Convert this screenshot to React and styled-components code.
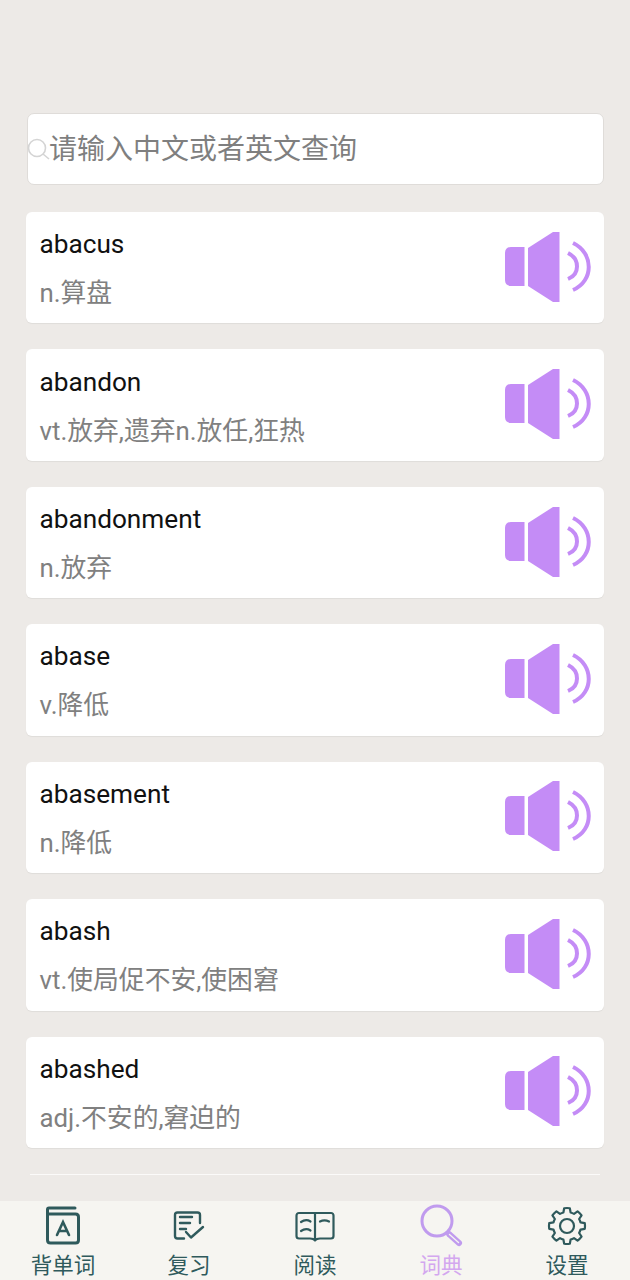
import React from 'react';
import styled, {createGlobalStyle} from 'styled-components';

const CJK = `Roboto, "Noto Sans CJK SC", sans-serif`;
const INK = '#2f5a5c';
const PURPLE = '#c48cf6';

const GlobalStyle = createGlobalStyle`
  html, body {
    margin: 0;
    padding: 0;
    background: #edeae7;
  }
`;

const Page = styled.div`
  width: 630px;
  height: 1280px;
  display: flex;
  flex-direction: column;
  overflow: hidden;
  font-family: ${CJK};
`;

const Content = styled.div`
  flex: 1;
  min-height: 0;
  padding: 113px 26px 0 26px;
  overflow: hidden;
`;

const SearchBox = styled.div`
  height: 72px;
  box-sizing: border-box;
  margin: 0 0.5px 0 1px;
  padding-bottom: 5px;
  display: flex;
  align-items: center;
  background: #fff;
  border: 1px solid #dfdcd9;
  border-radius: 7px;
  color: #7f7f7f;
  font-size: 28px;
`;

const SearchIcon = styled.svg`
  width: 23px;
  height: 23px;
  margin: 5px -1px 0 -1px;
  flex: none;
`;

const WordList = styled.div`
  margin-top: 27px;
  display: flex;
  flex-direction: column;
  gap: 26px;
`;

const Card = styled.div`
  height: 111.43px;
  box-sizing: border-box;
  padding: 0 12px 0 13.5px;
  display: flex;
  align-items: center;
  justify-content: space-between;
  background: #fff;
  border-radius: 6px;
  box-shadow: 0 1px 1px rgba(0, 0, 0, 0.06);
`;

const CardText = styled.div`
  display: flex;
  flex-direction: column;
  gap: 16px;
  padding-top: 3px;
`;

const Word = styled.div`
  color: #111;
  font-size: 26.2px;
  line-height: 33px;
`;

const Meaning = styled.div`
  color: #808080;
  font-size: 25.8px;
  line-height: 33px;
`;

const SpeakerIcon = styled.svg`
  width: 87px;
  height: 72px;
  margin-bottom: 2px;
  flex: none;
`;

const Divider = styled.div`
  height: 1px;
  margin: 26px 4px 0 4px;
  background: #fbfaf9;
`;

const TabBar = styled.div`
  height: 79px;
  flex: none;
  display: grid;
  grid-template-columns: repeat(5, 126px);
  background: #f6f5f1;
`;

const Tab = styled.div`
  display: flex;
  flex-direction: column;
  align-items: center;
  color: ${p => (p.$active ? '#d3a7ef' : INK)};
  font-size: 21.5px;
`;

const TabIcon = styled.div`
  height: 50px;
  display: flex;
  align-items: center;
  justify-content: center;
`;

const TabLabel = styled.div`
  line-height: 29px;
`;

const Speaker = () => (
  <SpeakerIcon viewBox="0 0 87 72">
    <path d="M6 16H19.5V55H6C2.5 55 0 53 0 49V22C0 18 2.5 16 6 16Z" fill={PURPLE} />
    <path d="M23 17L48 1H54.5V71H48L23 55Z" fill={PURPLE} />
    <path d="M63 22C75 28 75 43 63 48" fill="none" stroke={PURPLE} strokeWidth="4" />
    <path d="M68 12C89 22 89 50 68 59" fill="none" stroke={PURPLE} strokeWidth="4" />
  </SpeakerIcon>
);

const BookIcon = () => (
  <svg width="36" height="40" viewBox="0 0 36 40" fill="none" stroke={INK} strokeLinecap="round">
    <path d="M30 2H4C3 2 2.5 2.5 2.5 3.5V34C2.5 36 3.5 37 5.5 37H30.5C32.5 37 33.5 36 33.5 34V11C33.5 9 32.5 8 30.5 8H2.5" strokeWidth="3" />
    <path d="M12 29L18 16L24 29M14 25H22" strokeWidth="2.6" />
  </svg>
);

const ReviewIcon = () => (
  <svg width="32" height="30" viewBox="0 0 32 30" fill="none" stroke={INK} strokeWidth="2.4" strokeLinecap="round" strokeLinejoin="round">
    <path d="M27 12V4C27 2.5 26 1.5 24.5 1.5H4.5C3 1.5 2 2.5 2 4V25C2 26.5 3 27.5 4.5 27.5H11" />
    <path d="M7 6H19M7 12H17M7 18H13" />
    <path d="M13 21L18 26.5L30 16" />
  </svg>
);

const ReadIcon = () => (
  <svg width="40" height="32" viewBox="0 0 40 32" fill="none" stroke={INK} strokeWidth="2.2" strokeLinecap="round" strokeLinejoin="round">
    <path d="M20 3H4C2.5 3 1.5 4 1.5 5.5V26C1.5 27.5 2.5 28.5 4 28.5H15C17 28.5 19 29 20 30.5C21 29 23 28.5 25 28.5H36C37.5 28.5 38.5 27.5 38.5 26V5.5C38.5 4 37.5 3 36 3H20V30.5" />
    <path d="M6 12C9 10 13 10 15.5 11.5M6 21C9 19 13 19 15.5 20.5M25 11.5C28 10 31 10 34 11.5" />
  </svg>
);

const DictIcon = () => (
  <svg width="44" height="44" viewBox="0 0 44 44" fill="none" strokeLinecap="round">
    <circle cx="18" cy="17" r="15" stroke="#c09bee" strokeWidth="3" />
    <path d="M30 30L40 39" stroke="#c09bee" strokeWidth="6" />
    <path d="M30.5 30.5L39.5 38.5" stroke="#f6f5f1" strokeWidth="1.4" />
  </svg>
);

// eight toothed outline, worked out once instead of hand typing every point
const gearPath = () => {
  const point = (deg, r) => {
    const a = (deg * Math.PI) / 180;
    return `${(20 + r * Math.cos(a)).toFixed(2)} ${(20 + r * Math.sin(a)).toFixed(2)}`;
  };
  let d = '';
  for (let i = 0; i < 8; i++) {
    const c = i * 45 - 90;
    d += `${i ? 'L' : 'M'}${point(c - 15, 14)}L${point(c - 9, 18)}A18 18 0 0 1 ${point(c + 9, 18)}L${point(c + 15, 14)}A14 14 0 0 1 ${point(c + 30, 14)}`;
  }
  return `${d}Z`;
};

const GearIcon = () => (
  <svg width="40" height="40" viewBox="0 0 40 40" fill="none" stroke={INK} strokeWidth="2.2" strokeLinejoin="round">
    <path d={gearPath()} />
    <circle cx="20" cy="20" r="7" />
  </svg>
);

const WORDS = [
  ['abacus', 'n.算盘'],
  ['abandon', 'vt.放弃,遗弃n.放任,狂热'],
  ['abandonment', 'n.放弃'],
  ['abase', 'v.降低'],
  ['abasement', 'n.降低'],
  ['abash', 'vt.使局促不安,使困窘'],
  ['abashed', 'adj.不安的,窘迫的'],
];

const TABS = [
  {label: '背单词', icon: <BookIcon />},
  {label: '复习', icon: <ReviewIcon />},
  {label: '阅读', icon: <ReadIcon />},
  {label: '词典', icon: <DictIcon />, active: true},
  {label: '设置', icon: <GearIcon />},
];

const App = () => (
  <Page>
    <GlobalStyle />
    <Content>
      <SearchBox>
        <SearchIcon viewBox="0 0 23 23" fill="none" stroke="#d4d4d4" strokeWidth="1.6">
          <circle cx="10" cy="10" r="8.5" />
          <path d="M16 16L22 21" />
        </SearchIcon>
        请输入中文或者英文查询
      </SearchBox>
      <WordList>
        {WORDS.map(([word, meaning]) => (
          <Card key={word}>
            <CardText>
              <Word>{word}</Word>
              <Meaning>{meaning}</Meaning>
            </CardText>
            <Speaker />
          </Card>
        ))}
      </WordList>
      <Divider />
    </Content>
    <TabBar>
      {TABS.map(tab => (
        <Tab key={tab.label} $active={tab.active}>
          <TabIcon>{tab.icon}</TabIcon>
          <TabLabel>{tab.label}</TabLabel>
        </Tab>
      ))}
    </TabBar>
  </Page>
);

export default App;
